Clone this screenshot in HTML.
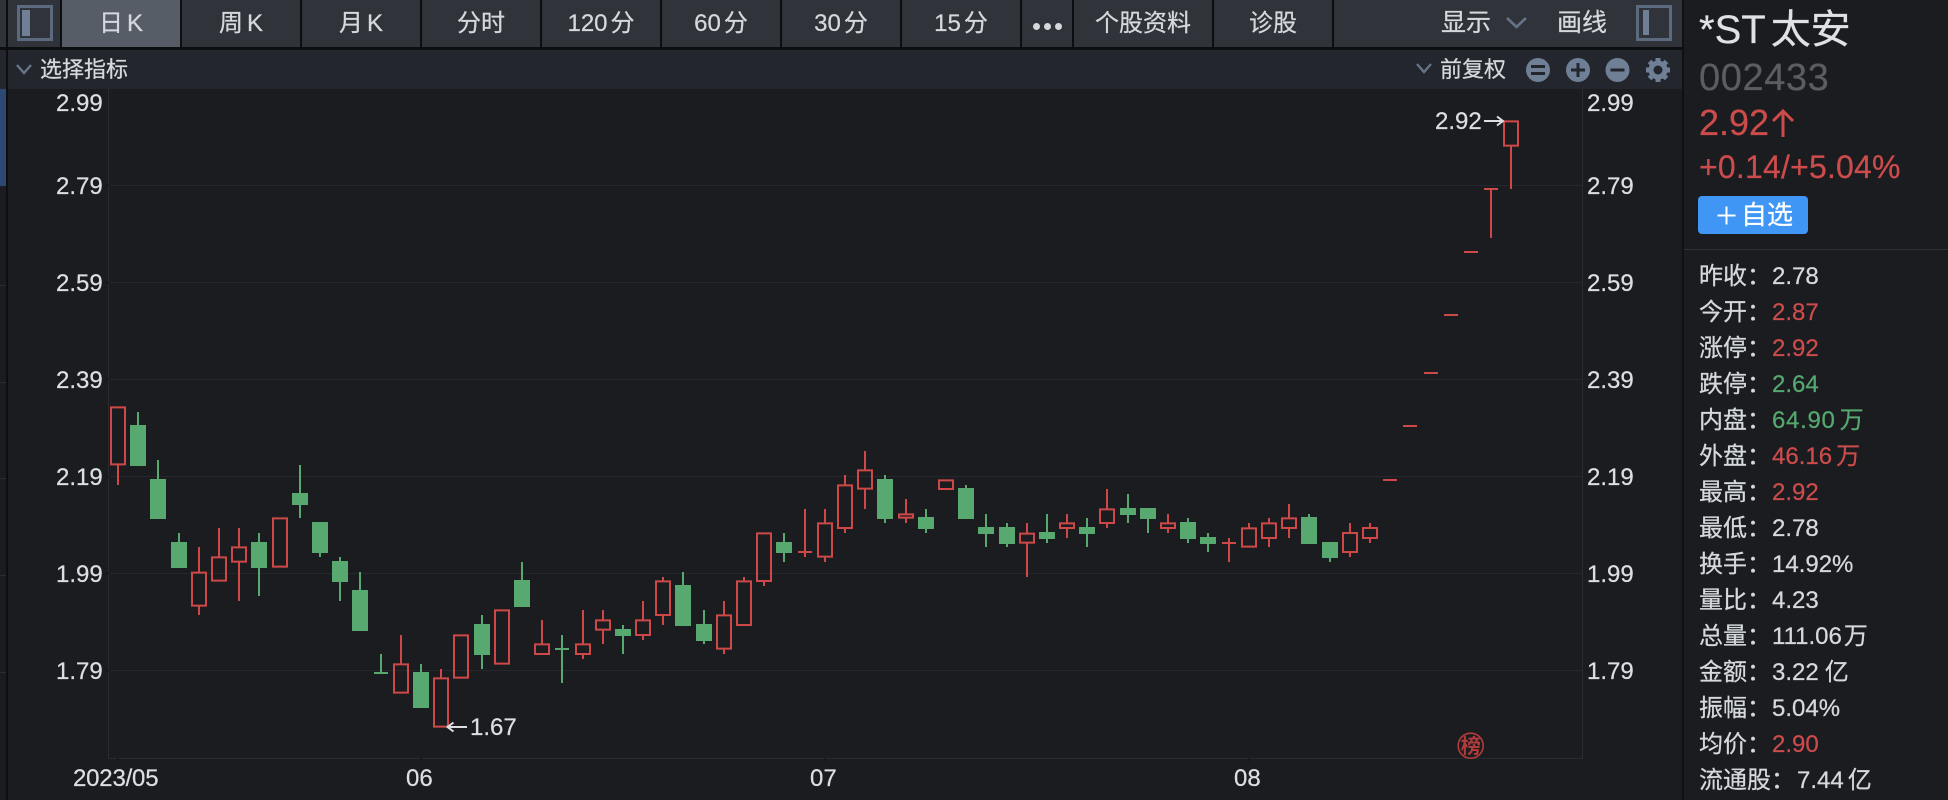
<!DOCTYPE html>
<html lang="zh"><head><meta charset="utf-8"><title>*ST 太安</title>
<style>
html,body{margin:0;padding:0;background:#1a1c20;}
body{position:relative;width:1948px;height:800px;overflow:hidden;font-family:"Liberation Sans","Noto Sans CJK SC",sans-serif;color:#d8dadd;-webkit-text-stroke:.25px;}
.a{position:absolute;white-space:nowrap;}
.tab{position:absolute;top:0;height:47px;background:#30333a;line-height:47px;text-align:center;font-size:24px;color:#d5d8dc;}
.tab b{font-weight:400;margin-left:3px;}
.tab i{font-style:normal;margin-left:4px;}
.lab{position:absolute;font-size:24px;height:36px;line-height:36px;white-space:nowrap;color:#d5d8dc;}
.r{color:#cc4b4b}.g{color:#55a86e}
.y{position:absolute;font-size:24px;line-height:30px;height:30px;color:#dcdee1;}
.u{margin-left:4px}
</style></head><body>
<div class="a" style="left:0;top:0;width:1682px;height:50px;background:#0d0e10"></div>
<div class="a" style="left:0;top:50px;width:1682px;height:39px;background:#23262d"></div>
<div class="a" style="left:0;top:0;width:6px;height:47px;background:#30333a"></div>
<div class="a" style="left:6px;top:0;width:2px;height:800px;background:#0d0e10"></div>
<div class="a" style="left:8px;top:0;width:52px;height:47px;background:#30333a"></div>
<div class="a" style="left:0;top:89px;width:6px;height:97px;background:#2c4873"></div>
<div class="a" style="left:0;top:285px;width:6px;height:1px;background:#2a2d32"></div>
<div class="a" style="left:0;top:382px;width:6px;height:1px;background:#2a2d32"></div>
<div class="a" style="left:0;top:478px;width:6px;height:1px;background:#2a2d32"></div>
<div class="a" style="left:0;top:575px;width:6px;height:1px;background:#2a2d32"></div>
<div class="a" style="left:0;top:672px;width:6px;height:1px;background:#2a2d32"></div>
<div class="a" style="box-sizing:border-box;left:17px;top:5px;width:36px;height:36px;border:3px solid #5c6a80"></div>
<div class="a" style="left:22px;top:10px;width:8px;height:26px;background:#6f7f96"></div>

<div class="tab" style="left:62px;width:118px;background:#575d66">日<i>K</i></div>
<div class="tab" style="left:182px;width:118px">周<i>K</i></div>
<div class="tab" style="left:302px;width:118px">月<i>K</i></div>
<div class="tab" style="left:422px;width:118px">分时</div>
<div class="tab" style="left:542px;width:118px">120<b>分</b></div>
<div class="tab" style="left:662px;width:118px">60<b>分</b></div>
<div class="tab" style="left:782px;width:118px">30<b>分</b></div>
<div class="tab" style="left:902px;width:118px">15<b>分</b></div>
<div class="tab" style="left:1022px;width:50px"></div>
<div class="a" style="left:1033px;top:23px;width:7px;height:7px;border-radius:50%;background:#d5d8dc"></div>
<div class="a" style="left:1044px;top:23px;width:7px;height:7px;border-radius:50%;background:#d5d8dc"></div>
<div class="a" style="left:1055px;top:23px;width:7px;height:7px;border-radius:50%;background:#d5d8dc"></div>
<div class="tab" style="left:1074px;width:138px">个股资料</div>
<div class="tab" style="left:1214px;width:118px">诊股</div>
<div class="tab" style="left:1334px;width:348px;background:#30333a"></div>
<div class="a" style="left:1441px;top:0;font-size:25px;line-height:47px;color:#d5d8dc">显示</div>
<div class="a" style="left:1557px;top:0;font-size:25px;line-height:47px;color:#d5d8dc">画线</div>
<div class="a" style="box-sizing:border-box;left:1636px;top:5px;width:36px;height:36px;border:3px solid #5c6a80"></div>
<div class="a" style="left:1643px;top:10px;width:6px;height:25px;background:#6f7f96"></div>

<div class="a" style="left:40px;top:50px;font-size:22px;line-height:40px;color:#d5d8dc">选择指标</div>
<div class="a" style="left:1440px;top:50px;font-size:22px;line-height:40px;color:#d5d8dc">前复权</div>

<svg class="a" style="left:0;top:0" width="1948" height="800" viewBox="0 0 1948 800" xmlns="http://www.w3.org/2000/svg">
<!-- chevrons -->
<path d="M17 65L24 73L31 65M1417 64L1424 72L1431 64" fill="none" stroke="#667388" stroke-width="2.4"/>
<path d="M1507 18L1516.5 27L1526 18" fill="none" stroke="#667388" stroke-width="2.6"/>
<!-- toolbar icons -->
<circle cx="1538" cy="70" r="12" fill="#6f7f96"/><path d="M1531 66.5H1545M1531 73.5H1545" stroke="#23262d" stroke-width="3"/>
<circle cx="1578" cy="70" r="12" fill="#6f7f96"/><path d="M1571 70H1585M1578 63V77" stroke="#23262d" stroke-width="3"/>
<circle cx="1617.5" cy="70" r="12" fill="#6f7f96"/><path d="M1610.5 70H1624.5" stroke="#23262d" stroke-width="3"/>
<circle cx="1658" cy="70" r="7" fill="none" stroke="#6f7f96" stroke-width="5"/>
<path d="M1658 58V62M1658 78V82M1646 70H1650M1666 70H1670M1649.5 61.5L1652.3 64.3M1663.7 75.7L1666.5 78.5M1649.5 78.5L1652.3 75.7M1663.7 64.3L1666.5 61.5" stroke="#6f7f96" stroke-width="5"/>
<!-- grid -->
<path d="M109 185.5H1582M109 282.5H1582M109 379.5H1582M109 476.5H1582M109 573.5H1582M109 670.5H1582" stroke="#25272c" stroke-width="1"/>
<path d="M108.5 89V758.5H1582.5V89" fill="none" stroke="#282b30" stroke-width="1"/>
<path d="M106 185.5H109M106 282.5H109M106 379.5H109M106 476.5H109M106 573.5H109M106 670.5H109M118 758V761M421 758V761M825 758V761M1249 758V761" stroke="#0d0e10" stroke-width="1"/>

<g transform="translate(90,390) scale(.33333)">
<path fill="none" stroke="#cf4848" stroke-width="6" d="M63 52H105V223H63ZM84 225V285M306 548H348V647H306ZM327 471V546M327 649V675M366 502H408V572H366ZM387 414V500M426 472H468V515H426ZM447 414V470M447 517V633M549 385H591V530H549ZM912 823H954V908H912ZM933 735V821M1032 865H1074V1010H1032ZM1053 837V863M1092 736H1134V863H1092ZM1215 661H1257V821H1215Z"/>
<path fill="none" stroke="#57a970" stroke-width="6" d="M144 66V105M204 210V267M267 429V456M507 429V618M630 225V384M690 396V501M750 501V633M810 546V600M873 792V849M852 849H894M993 822V846M1176 675V837"/>
<path fill="#57a970" d="M120 105h48V228h-48ZM180 267h48V387h-48ZM243 456h48V534h-48ZM483 456h48V534h-48ZM606 309h48V345h-48ZM666 396h48V489h-48ZM726 513h48V576h-48ZM786 600h48V723h-48ZM969 846h48V954h-48ZM1152 702h48V795h-48Z"/>
</g>
<g transform="translate(500,390) scale(.33333)">
<path fill="none" stroke="#cf4848" stroke-width="6" d="M105 763H147V792H105ZM126 690V761M228 763H270V792H228ZM249 660V761M249 794V807M288 691H330V719H288ZM309 660V689M309 721V762M408 691H450V735H408ZM429 633V689M429 737V750M468 574H510V675H468ZM489 561V572M489 677V705M651 676H693V776H651ZM672 633V674M672 778V792M711 574H753V705H711ZM732 561V572M771 430H813V573H771ZM792 575V588M915 357V501M894 486H936M954 400H996V500H954ZM975 357V398M975 502V516M1014 286H1056V414H1014ZM1035 255V284M1035 416V429M1074 241H1116V296H1074ZM1095 183V239M1095 298V357M1197 373H1239V383H1197ZM1218 327V371M1218 385V399"/>
<path fill="none" stroke="#57a970" stroke-width="6" d="M66 516V570M186 735V879M165 777H207M369 705V792M549 546V585M612 660V762M852 429V516M1155 255V399"/>
<path fill="#57a970" d="M42 570h48V651h-48ZM345 717h48V738h-48ZM525 585h48V708h-48ZM588 702h48V753h-48ZM828 456h48V489h-48ZM1131 267h48V387h-48Z"/>
</g>
<g transform="translate(910,430) scale(.33333)">
<path fill="none" stroke="#cf4848" stroke-width="6" d="M87 151H129V177H87ZM330 311H372V338H330ZM351 279V309M351 340V441M450 280H492V294H450ZM471 252V278M471 296V324M570 238H612V279H570ZM591 177V236M591 281V294M753 280H795V294H753ZM774 252V278M774 296V309M957 324V396M936 339H978M996 295H1038V350H996ZM1017 279V293M1056 280H1098V324H1056ZM1077 264V278M1077 326V351M1116 265H1158V294H1116ZM1137 222V263M1137 296V324"/>
<path fill="none" stroke="#57a970" stroke-width="6" d="M48 237V309M168 165V174M228 252V351M291 279V351M411 252V339M531 264V351M654 192V279M714 234V309M834 264V339M894 309V366M1197 252V261"/>
<path fill="#57a970" d="M24 261h48V297h-48ZM144 174h48V267h-48ZM204 291h48V312h-48ZM267 291h48V342h-48ZM387 306h48V327h-48ZM507 291h48V312h-48ZM630 234h48V255h-48ZM690 234h48V267h-48ZM810 276h48V327h-48ZM870 321h48V342h-48ZM1173 261h48V342h-48Z"/>
</g>
<g transform="translate(1320,490) scale(.33333)">
<path fill="none" stroke="#cf4848" stroke-width="6" d="M69 129H111V186H69ZM90 99V127M90 188V201M129 114H171V144H129ZM150 99V112M150 146V159"/>
<path fill="none" stroke="#57a970" stroke-width="6" d="M30 204V216"/>
<path fill="#57a970" d="M6 156h48V204h-48Z"/>
</g>
<g transform="translate(1320,90) scale(.33333)">
<path fill="none" stroke="#cf4848" stroke-width="6" d="M189 1170H231M249 1008H291M312 849H354M372 675H414M432 486H474M492 297H534M513 297V444M552 94H594V167H552ZM573 169V297"/>
</g>
<!-- markers -->
<path d="M1484 121H1502M1497 116.5L1503 121L1497 125.5" fill="none" stroke="#dcdee1" stroke-width="2"/>
<path d="M448 727H467M453.5 722.5L447.5 727L453.5 731.5" fill="none" stroke="#dcdee1" stroke-width="2"/>
<!-- stamp -->
<circle cx="1470.7" cy="745.7" r="12.5" fill="none" stroke="#b33b3c" stroke-width="1.6"/>
<text x="1470.7" y="753" text-anchor="middle" font-size="20" font-weight="700" fill="#b33b3c" font-family="'Noto Sans CJK SC',sans-serif">榜</text>
</svg>

<div class="y" style="left:56px;top:89px">2.99</div>
<div class="y" style="left:56px;top:172px">2.79</div>
<div class="y" style="left:56px;top:269px">2.59</div>
<div class="y" style="left:56px;top:366px">2.39</div>
<div class="y" style="left:56px;top:463px">2.19</div>
<div class="y" style="left:56px;top:560px">1.99</div>
<div class="y" style="left:56px;top:657px">1.79</div>
<div class="y" style="left:1587px;top:89px">2.99</div>
<div class="y" style="left:1587px;top:172px">2.79</div>
<div class="y" style="left:1587px;top:269px">2.59</div>
<div class="y" style="left:1587px;top:366px">2.39</div>
<div class="y" style="left:1587px;top:463px">2.19</div>
<div class="y" style="left:1587px;top:560px">1.99</div>
<div class="y" style="left:1587px;top:657px">1.79</div>
<div class="y" style="left:73px;top:764px;letter-spacing:-.2px">2023/05</div>
<div class="y" style="left:406px;top:764px">06</div>
<div class="y" style="left:810px;top:764px">07</div>
<div class="y" style="left:1234px;top:764px">08</div>
<div class="y" style="left:470px;top:713px">1.67</div>
<div class="y" style="left:1435px;top:107px">2.92</div>

<!-- right panel -->
<div class="a" style="left:1682px;top:0;width:2px;height:800px;background:#0f1012"></div>
<div class="a" style="left:1699px;top:5px;font-size:40px;line-height:50px;color:#dfe1e4">*ST<span style="margin-left:5px">太安</span></div>
<div class="a" style="left:1699px;top:55px;font-size:38px;line-height:46px;letter-spacing:.6px;color:#5a5d62">002433</div>
<div class="a r" style="left:1699px;top:101px;font-size:36px;line-height:44px">2.92</div>
<svg class="a" style="left:1770px;top:108px" width="27" height="32" viewBox="0 0 27 32"><path d="M13 3V29M3 13L13 3L23 13" fill="none" stroke="#cc4b4b" stroke-width="3"/></svg>
<div class="a r" style="left:1699px;top:147px;font-size:32px;line-height:40px;letter-spacing:.2px">+0.14/+5.04%</div>
<div class="a" style="left:1698px;top:196px;width:110px;height:38px;background:#4096f5;border-radius:4px"></div>
<svg class="a" style="left:1717px;top:206px" width="19" height="19" viewBox="0 0 19 19"><path d="M0.5 9.5H18.5M9.5 0.5V18.5" stroke="#fff" stroke-width="2"/></svg>
<div class="a" style="left:1741px;top:196px;font-size:26px;line-height:38px;color:#fff">自选</div>
<div class="a" style="left:1684px;top:248.5px;width:264px;height:1px;background:#2d3035"></div>

<div class="lab" style="left:1699px;top:259px">昨收：</div><div class="lab" style="left:1772px;top:259px">2.78</div>
<div class="lab" style="left:1699px;top:295px">今开：</div><div class="lab r" style="left:1772px;top:295px">2.87</div>
<div class="lab" style="left:1699px;top:331px">涨停：</div><div class="lab r" style="left:1772px;top:331px">2.92</div>
<div class="lab" style="left:1699px;top:367px">跌停：</div><div class="lab g" style="left:1772px;top:367px">2.64</div>
<div class="lab" style="left:1699px;top:403px">内盘：</div><div class="lab g" style="left:1772px;top:403px;letter-spacing:.7px">64.90<span class="u">万</span></div>
<div class="lab" style="left:1699px;top:439px">外盘：</div><div class="lab r" style="left:1772px;top:439px">46.16<span class="u">万</span></div>
<div class="lab" style="left:1699px;top:475px">最高：</div><div class="lab r" style="left:1772px;top:475px">2.92</div>
<div class="lab" style="left:1699px;top:511px">最低：</div><div class="lab" style="left:1772px;top:511px">2.78</div>
<div class="lab" style="left:1699px;top:547px">换手：</div><div class="lab" style="left:1772px;top:547px">14.92%</div>
<div class="lab" style="left:1699px;top:583px">量比：</div><div class="lab" style="left:1772px;top:583px">4.23</div>
<div class="lab" style="left:1699px;top:619px">总量：</div><div class="lab" style="left:1772px;top:619px">111.06<span style="margin-left:2px">万</span></div>
<div class="lab" style="left:1699px;top:655px">金额：</div><div class="lab" style="left:1772px;top:655px">3.22<span style="margin-left:6px">亿</span></div>
<div class="lab" style="left:1699px;top:691px">振幅：</div><div class="lab" style="left:1772px;top:691px">5.04%</div>
<div class="lab" style="left:1699px;top:727px">均价：</div><div class="lab r" style="left:1772px;top:727px">2.90</div>
<div class="lab" style="left:1699px;top:763px">流通股：</div><div class="lab" style="left:1797px;top:763px">7.44<span class="u">亿</span></div>
</body></html>
